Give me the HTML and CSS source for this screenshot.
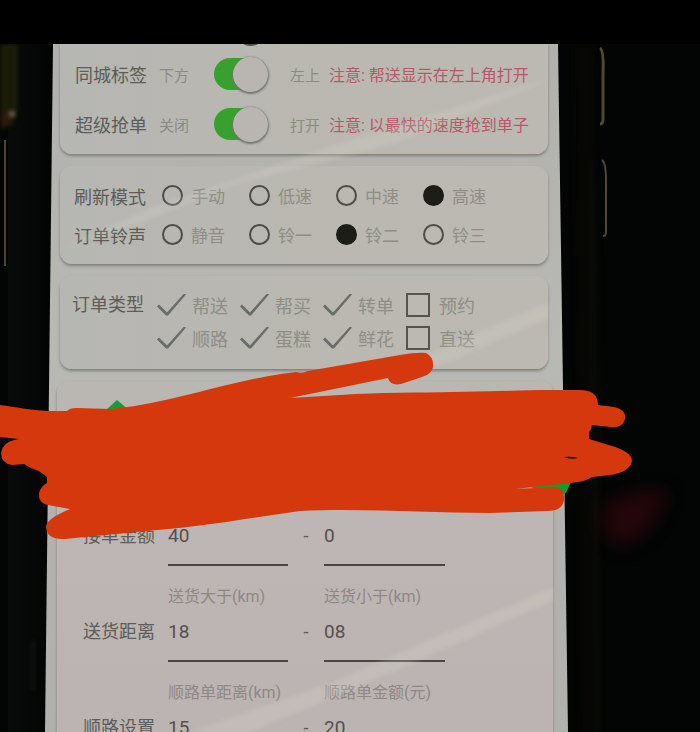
FILE: index.html
```html
<!DOCTYPE html>
<html lang="zh-CN">
<head>
<meta charset="utf-8">
<title>抢单设置</title>
<link rel="stylesheet" href="styles.css">
</head>
<body>
<div class="topbar"></div>
<main class="scene">
  <svg class="layer" viewBox="0 44 700 688" preserveAspectRatio="none" aria-hidden="true">
    <defs>
      <filter id="soft" x="-50%" y="-50%" width="200%" height="200%" color-interpolation-filters="sRGB"><feGaussianBlur stdDeviation="2"/></filter>
      <filter id="haze" x="-50%" y="-50%" width="200%" height="200%" color-interpolation-filters="sRGB"><feGaussianBlur stdDeviation="8"/></filter>
      <linearGradient id="bezel"><stop offset="0" stop-color="#090b0a"/><stop offset="1" stop-color="#020303"/></linearGradient>
    </defs>
    <rect y="44" width="700" height="688" fill="#030404"/>
    <rect x="8" y="44" width="46" height="688" fill="url(#bezel)"/>
    <g filter="url(#soft)">
      <path d="M0 44H18V110L12 126H0Z" fill="#1b1c08"/>
      <path d="M0 116L10 108L12 122L2 130Z" fill="#2c190c"/>
      <path d="M574 44H594V150L600 270V732H580Z" fill="#060704"/>
      <path d="M592 160L598 732" stroke="#0c0d07" stroke-width="3"/>
      <path d="M33 640V690" stroke="#30312f"/>
    </g>
    <path d="M5 140V266" stroke="#4c4435" stroke-width="2" fill="none"/>
    <circle cx="12" cy="114" r="3" fill="#716a60" filter="url(#soft)"/>
    <path d="M600 48Q604 50 603 75V119Q603 124 600 124" stroke="#51492f" stroke-width="3" fill="none"/>
    <path d="M602 160Q606 163 606 180V232Q606 236 603 236" stroke="#51492f" stroke-width="2" fill="none"/>
    <path d="M604 505Q640 485 668 492Q655 535 622 546Q598 540 604 505Z" fill="#22060a" filter="url(#haze)"/>
  </svg>

  <div class="screen">
    <section class="card card-switches">
      <div class="switch-row">
        <span class="title">同城标签</span>
        <span class="off-text">下方</span>
        <input class="switch" type="checkbox" role="switch" id="tag" aria-label="同城标签" checked>
        <label class="on-text" for="tag">左上</label>
        <span class="note">注意: 帮送显示在左上角打开</span>
      </div>
      <div class="switch-row">
        <span class="title">超级抢单</span>
        <span class="off-text">关闭</span>
        <input class="switch" type="checkbox" role="switch" id="grab" aria-label="超级抢单" checked>
        <label class="on-text" for="grab">打开</label>
        <span class="note">注意: 以最快的速度抢到单子</span>
      </div>
    </section>

    <section class="card card-radios">
      <div class="radio-row" role="radiogroup" aria-label="刷新模式">
        <span class="title">刷新模式</span>
        <label class="choice"><input class="radio" type="radio" name="mode">手动</label>
        <label class="choice"><input class="radio" type="radio" name="mode">低速</label>
        <label class="choice"><input class="radio" type="radio" name="mode">中速</label>
        <label class="choice"><input class="radio" type="radio" name="mode" checked>高速</label>
      </div>
      <div class="radio-row" role="radiogroup" aria-label="订单铃声">
        <span class="title">订单铃声</span>
        <label class="choice"><input class="radio" type="radio" name="bell">静音</label>
        <label class="choice"><input class="radio" type="radio" name="bell">铃一</label>
        <label class="choice"><input class="radio" type="radio" name="bell" checked>铃二</label>
        <label class="choice"><input class="radio" type="radio" name="bell">铃三</label>
      </div>
    </section>

    <section class="card card-types">
      <span class="title">订单类型</span>
      <div class="types">
        <label class="choice"><input class="check" type="checkbox" checked>帮送</label>
        <label class="choice"><input class="check" type="checkbox" checked>帮买</label>
        <label class="choice"><input class="check" type="checkbox" checked>转单</label>
        <label class="choice"><input class="check" type="checkbox">预约</label>
        <label class="choice"><input class="check" type="checkbox" checked>顺路</label>
        <label class="choice"><input class="check" type="checkbox" checked>蛋糕</label>
        <label class="choice"><input class="check" type="checkbox" checked>鲜花</label>
        <label class="choice"><input class="check" type="checkbox">直送</label>
      </div>
    </section>

    <section class="card card-fields">
      <div class="range">
        <span class="title">接单金额</span>
        <input class="value" type="text" value="40" aria-label="接单金额">
        <span class="dash">-</span>
        <input class="value" type="text" value="0" aria-label="接单金额">
      </div>
      <div class="range">
        <label class="hint hint-from" for="dist-min">送货大于(km)</label>
        <label class="hint hint-to" for="dist-max">送货小于(km)</label>
        <span class="title">送货距离</span>
        <input class="value" type="text" id="dist-min" value="18">
        <span class="dash">-</span>
        <input class="value" type="text" id="dist-max" value="08">
      </div>
      <div class="range">
        <label class="hint hint-from" for="way-dist">顺路单距离(km)</label>
        <label class="hint hint-to" for="way-pay">顺路单金额(元)</label>
        <span class="title">顺路设置</span>
        <input class="value" type="text" id="way-dist" value="15">
        <span class="dash">-</span>
        <input class="value" type="text" id="way-pay" value="20">
      </div>
    </section>
  </div>

  <svg class="layer" viewBox="0 44 700 688" preserveAspectRatio="none" aria-hidden="true">
    <path d="M243 44H258Q250 48 243 44Z" fill="#50504c"/>
    <g filter="url(#soft)" fill="#e0ded0">
      <path d="M530 84L548 80L400 142L230 186L140 224L62 248L150 208L320 150Z" opacity=".2"/>
      <path d="M553 588V600L420 660L250 732H190L330 684L420 644Z" opacity=".22"/>
      <path d="M549 302V318L440 366L400 366Z" opacity=".2"/>
    </g>
    <path d="M106 410L117 400L129 410Z" fill="#159d3b"/>
    <path d="M530 487L572 480L566 493L560 496Z" fill="#159c2c"/>
    <path fill="#d4380c" fill-rule="evenodd" d="M0 405C16 407 30 410 48 411H67Q70 408 76 408L110 409C150 406 200 391 240 382Q270 375 296 372Q302 374 308 371L400 355Q418 352 426 353Q434 357 433 367Q432 374 422 377L401 384Q390 386 388 378L290 398L340 395C380 392 420 393 452 392L540 390H580Q598 390 598 405L614 407Q627 410 625 419Q622 429 610 427L592 425Q592 429 589 432V439L612 446Q632 452 632 461Q630 472 610 475L592 477Q585 482 570 483L515 489L555 487Q565 488 564 500Q562 511 548 511L490 513C430 513 360 508 300 511C250 518 200 527 146 531L65 539Q46 540 46 526Q48 518 70 509L48 505Q38 503 39 493Q41 486 47 483V477L39 471Q31 469 24 464L12 465Q1 463 1 453Q3 441 19 439L0 437ZM564 457Q570 460 578 458Q571 456 564 457Z"/>
  </svg>
</main>
</body>
</html>
```
FILE: styles.css
```css
* {
  box-sizing: border-box;
}

body {
  margin: 0;
  height: 100vh;
  display: flex;
  flex-direction: column;
  overflow: hidden;
  background: #000;
  color: #5c5c58;
  font-family: Roboto, "Noto Sans CJK SC", sans-serif;
}

.topbar {
  flex: 0 0 44px;
  background: #000;
}

.scene {
  position: relative;
  flex: 1;
  min-height: 0;
  display: flex;
  padding: 0 132px 0 45px;
  overflow: hidden;
}

.layer {
  position: absolute;
  inset: 0;
  width: 100%;
  height: 100%;
  pointer-events: none;
}

.screen {
  position: relative;
  flex: 1;
  min-width: 0;
  background: linear-gradient(#b0b1ad, #b8b9b5 45%, #b3b1ae 70%, #b0b0ad);
  clip-path: polygon(8px 0, calc(100% - 10px) 0, 100% 100%, 0 100%);
}

.card {
  margin: 0 20px 12px 15px;
  border-radius: 12px;
  background: linear-gradient(90deg, #b6b6b3, #bab8b0 60%, #bcb9b2);
  box-shadow: 0 2px 3px #7f807a;
}

.card-switches {
  border-radius: 0 0 12px 12px;
  padding: 5px 0 5px 15px;
}

.title {
  font-size: 18px;
  white-space: nowrap;
}

.switch-row {
  display: grid;
  grid-template-columns: 84px 55px 76px 39px 1fr;
  align-items: center;
  height: 50px;
}

.off-text,
.on-text {
  font-size: 15px;
  color: #8b8b86;
}

.note {
  font-size: 16px;
  color: #b8566a;
  white-space: nowrap;
}

.switch {
  appearance: none;
  display: flex;
  align-items: center;
  justify-content: flex-end;
  width: 54px;
  height: 32px;
  margin: 0;
  border-radius: 16px;
  background: #37a02f;
}

.switch::before {
  content: "";
  flex: none;
  width: 35px;
  height: 35px;
  border-radius: 50%;
  background: #b9b6b2;
  box-shadow: 0 1px 2px 1px #74746e;
}

.card-radios {
  padding: 10px 0 10px 14px;
}

.radio-row {
  display: grid;
  grid-template-columns: 88px repeat(3, 87px) 1fr;
  align-items: center;
  height: 39px;
}

.choice {
  display: flex;
  align-items: center;
  gap: 8px;
  font-size: 18px;
  color: #8e8e87;
  white-space: nowrap;
}

.radio-row .choice {
  font-size: 17px;
}

.radio {
  appearance: none;
  width: 21px;
  height: 21px;
  margin: 0;
  border: 2px solid #4c4c49;
  border-radius: 50%;
}

.radio:checked {
  border-color: #1c1d19;
  background: #1c1d19;
}

.card-types {
  display: flex;
  padding: 12px 0 15px 12px;
}

.card-types .title {
  flex: 0 0 85px;
  line-height: 33px;
}

.types {
  flex: 1;
  display: grid;
  grid-template-columns: repeat(3, 83px) 1fr;
  grid-auto-rows: 33px;
}

.types .choice {
  gap: 6px;
}

.check {
  appearance: none;
  width: 24px;
  height: 24px;
  margin: 0 3px 0 0;
  border: 2px solid #53534f;
}

.check:checked {
  width: 29px;
  height: 22px;
  margin: 0;
  border: 0;
  background: #686d69;
  clip-path: polygon(0 13px, 2px 11px, 10px 19px, 27px 0, 29px 1px, 11px 22px, 9px 22px);
}

.card-fields {
  margin: 0 15px 0 12px;
  padding: 137px 0 12px 26px;
  background: linear-gradient(#b9b7b2, #beb6b4 35%, #bbb3b1);
}

.range {
  display: grid;
  grid-template-columns: 85px 120px 36px 121px;
}

.range + .range {
  padding-top: 21px;
}

.hint {
  margin-bottom: 7px;
  font-size: 16px;
  line-height: 20px;
  color: #8f8785;
  white-space: nowrap;
}

.hint-from {
  grid-column: 2;
}

.hint-to {
  grid-column: 4;
}

.range .title,
.dash {
  line-height: 36px;
}

.range .title {
  grid-column: 1;
}

.dash {
  font-size: 18px;
  text-align: center;
}

.value {
  width: 100%;
  height: 48px;
  margin: 0;
  padding: 0 0 12px;
  border: 0;
  border-bottom: 2px solid #4a4444;
  border-radius: 0;
  background: none;
  color: #554f4e;
  font-family: inherit;
  font-size: 19px;
}
```
